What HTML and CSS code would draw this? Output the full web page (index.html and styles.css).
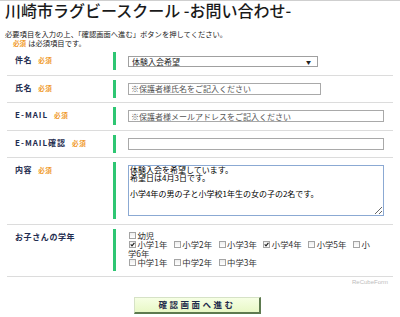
FILE: index.html
```html
<!DOCTYPE html>
<html lang="ja">
<head>
<meta charset="utf-8">
<title>川崎市ラグビースクール お問い合わせ</title>
<link rel="stylesheet" href="styles.css">
</head>
<body>
<h1 class="title">川崎市ラグビースクール -お問い合わせ-</h1>
<div class="intro">
  <p class="intro-line">必要項目を入力の上、「確認画面へ進む」ボタンを押してください。</p>
  <p class="intro-line indent"><span class="req">必須</span>は必須項目です。</p>
</div>
<form class="form">
  <div class="row">
    <div class="label">件名<span class="req">必須</span></div>
    <div class="field"><div class="select"><span>体験入会希望</span><span class="arrow">▼</span></div></div>
  </div>
  <div class="row">
    <div class="label">氏名<span class="req">必須</span></div>
    <div class="field"><input class="text name" type="text" placeholder="※保護者様氏名をご記入ください"></div>
  </div>
  <div class="row">
    <div class="label latin">E-MAIL<span class="req">必須</span></div>
    <div class="field"><input class="text wide" type="text" placeholder="※保護者様メールアドレスをご記入ください"></div>
  </div>
  <div class="row">
    <div class="label latin">E-MAIL確認<span class="req">必須</span></div>
    <div class="field"><input class="text wide" type="text"></div>
  </div>
  <div class="row">
    <div class="label">内容<span class="req">必須</span></div>
    <div class="field"><textarea class="area">体験入会を希望しています。
希望日は4月3日です。

小学4年の男の子と小学校1年生の女の子の2名です。</textarea></div>
  </div>
  <div class="row">
    <div class="label">お子さんの学年</div>
    <div class="field checks-field">
      <div class="checks"><label class="cb"><span class="box"></span>幼児</label><br><label class="cb"><span class="box"><svg viewBox="0 0 5 5"><path d="M0.7 2.4 L2 3.8 L4.4 0.8"/></svg></span>小学1年</label><label class="cb"><span class="box"></span>小学2年</label><label class="cb"><span class="box"></span>小学3年</label><label class="cb"><span class="box"><svg viewBox="0 0 5 5"><path d="M0.7 2.4 L2 3.8 L4.4 0.8"/></svg></span>小学4年</label><label class="cb"><span class="box"></span>小学5年</label><label class="cb"><span class="box"></span>小学6年</label><br><label class="cb"><span class="box"></span>中学1年</label><label class="cb"><span class="box"></span>中学2年</label><label class="cb"><span class="box"></span>中学3年</label></div>
    </div>
  </div>
  <div class="credit">ReCubeForm</div>
  <button class="submit" type="button">確認画面へ進む</button>
</form>
</body>
</html>
```
FILE: styles.css
```css
* { box-sizing: border-box; }
html, body { margin: 0; padding: 0; }
body {
  border-top: 1px solid #cfcfcf;
  font-family: "Noto Sans CJK JP", "Noto Sans", sans-serif;
  color: #222;
  background: #fff;
  width: 400px;
  height: 317px;
  overflow: hidden;
}
.title {
  margin: -1px 0 0 5px;
  font-size: 16px;
  line-height: 20px;
  font-weight: 500;
  color: #1a1a1a;
  white-space: nowrap;
}
.intro {
  margin: 10px 0 0 5px;
  font-size: 7.3px;
  line-height: 9px;
}
.intro-line { margin: 0; white-space: nowrap; }
.indent { padding-left: 8px; }
.req {
  color: #f09a2a;
  font-size: 6.6px;
  font-weight: bold;
  margin-right: 2px;
}
.form { margin: 0 0 0 7px; width: 386px; }
.row {
  display: flex;
  padding: 4px 0 4.6px;
  border-bottom: 1px solid #dcdcdc;
}
.label {
  width: 106px;
  flex: none;
  padding: 3px 0 0 8px;
  font-size: 8px;
  line-height: 10px;
  font-weight: bold;
  color: #1f2d50;
  letter-spacing: 0.6px;
  white-space: nowrap;
}
.label .req { margin-left: 6px; letter-spacing: 0.5px; }
.latin { letter-spacing: 1px; }
.field {
  flex: 1;
  border-left: 3px solid #2ec673;
  padding: 3px 0 3px 12px;
  min-height: 18px;
}
.select {
  width: 190px;
  height: 11px;
  margin-top: 1px;
  border: 1px solid #a0a0a0;
  display: flex;
  justify-content: space-between;
  align-items: center;
  padding: 0 6px 0 3px;
  font-size: 8px;
  line-height: 9px;
  color: #222;
}
.arrow { font-size: 5px; color: #222; }
.text {
  display: block;
  height: 12px;
  border: 1px solid #a9a9a9;
  padding: 0 2px;
  font-family: "Noto Sans CJK JP", sans-serif;
  font-size: 8px;
  line-height: 10px;
  color: #222;
  background: #fff;
  outline: none;
}
.text::placeholder { color: #555; }
.name { width: 193px; }
.wide { width: 256px; }
.area {
  display: block;
  width: 256px;
  height: 51px;
  border: 1px solid #8ba9d3;
  padding: 0 1px;
  margin: 0;
  font-family: "Noto Sans CJK JP", sans-serif;
  font-size: 8px;
  line-height: 7.8px;
  color: #000;
  resize: both;
  outline: none;
}
.checks-field { padding: 2px 0 4px 12px; }
.checks {
  width: 244px;
  font-size: 8.4px;
  line-height: 9px;
  color: #333;
}
.cb { margin-right: 5.5px; }
.box {
  display: inline-block;
  width: 7px;
  height: 7px;
  border: 1px solid #a4a4a4;
  background: linear-gradient(#eeeeee, #ffffff);
  margin: 0 1.5px 0 1px;
}
.box svg {
  display: block;
  width: 5px;
  height: 5px;
  fill: none;
  stroke: #1a1a1a;
  stroke-width: 1.1;
}
.credit {
  text-align: right;
  padding-right: 5px;
  margin-top: 1px;
  font-family: "Liberation Sans", sans-serif;
  font-size: 6px;
  line-height: 8px;
  color: #bdbdbd;
}
.submit {
  display: block;
  margin: 11px 0 0 127px;
  width: 127px;
  height: 17px;
  padding: 0;
  background: linear-gradient(#f6ffe4, #e8f8c6);
  border-style: solid;
  border-width: 1px 2px 2px 1px;
  border-color: #d6e2c6 #5d7a4f #5d7a4f #d6e2c6;
  font-family: "Noto Sans CJK JP", sans-serif;
  font-size: 8.5px;
  font-weight: bold;
  letter-spacing: 2.5px;
  color: #1e2b4a;
  line-height: 13px;
}
```
